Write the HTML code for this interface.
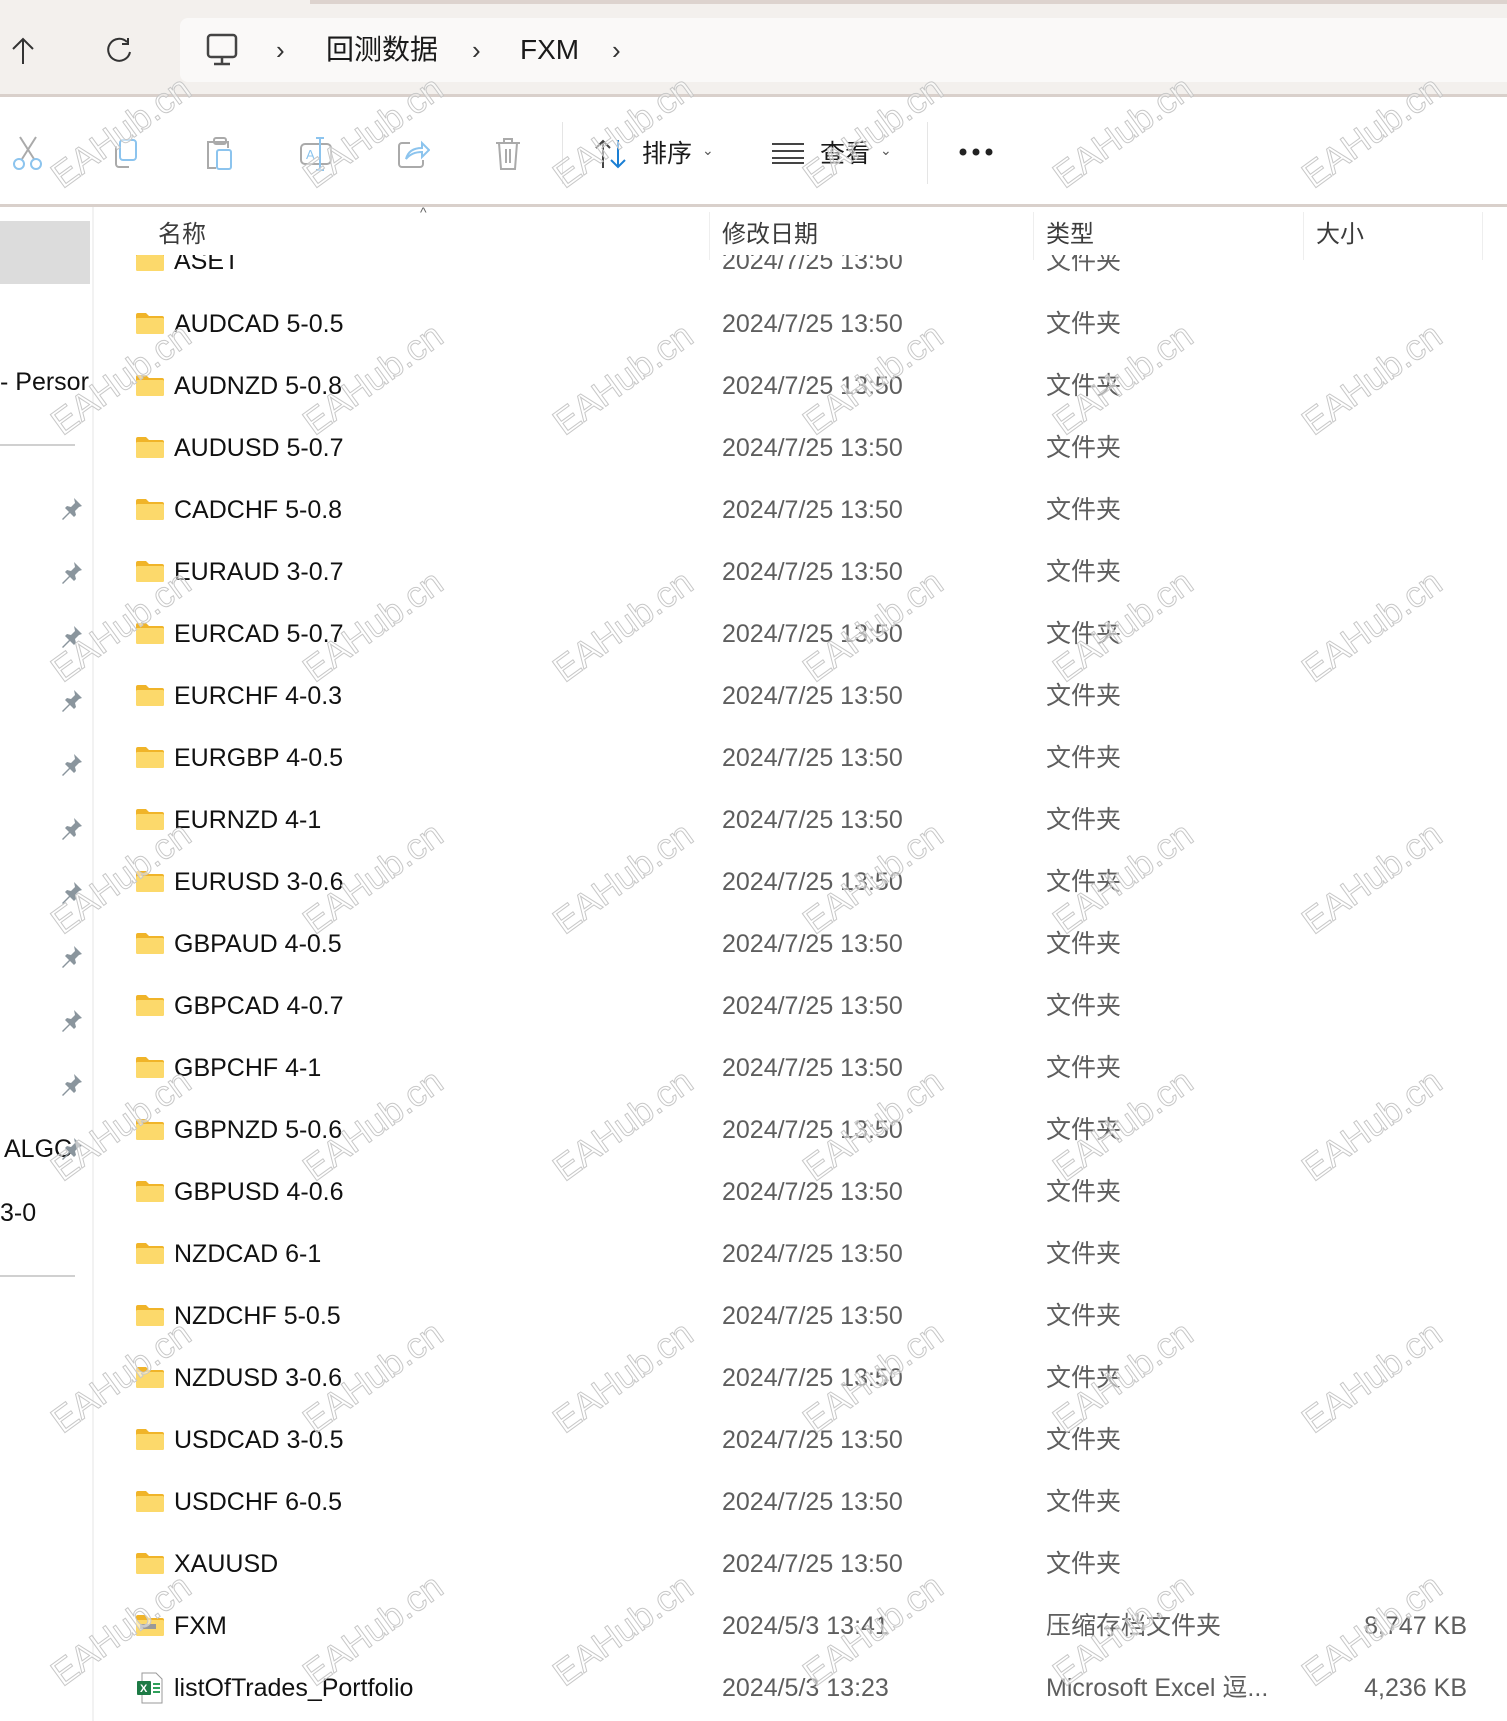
<!DOCTYPE html>
<html><head><meta charset="utf-8"><style>
*{margin:0;padding:0;box-sizing:border-box}
body{width:1507px;height:1721px;overflow:hidden;background:#fff;font-family:"Liberation Sans","Noto Sans CJK SC",sans-serif;position:relative;color:#1a1a1a}
.abs{position:absolute}
.top{left:0;top:0;width:1507px;height:97px;background:#f3f0ed;border-bottom:3px solid #d9d0cb}
.tline{left:310px;top:0;width:1197px;height:4px;background:#ddd3ce}
.addr{left:180px;top:18px;width:1327px;height:64px;background:#faf9f8;border-radius:8px 0 0 8px}
.t26{font-size:28px;color:#1a1a1a;top:30px;line-height:40px}
.chev{font-size:26px;top:30px;line-height:40px;color:#333}
.tb{left:0;top:97px;width:1507px;height:110px;background:#fff;border-bottom:3px solid #d9d0cb}
.hdr{font-size:24px;color:#3c3c3c;top:218px;line-height:34px}
.vd{width:1px;background:#eee;top:212px;height:48px}
.row{position:absolute;left:0;width:1507px;height:40px;font-size:25px;line-height:40px}
.row .n{position:absolute;left:174px;color:#111}
.row .d{position:absolute;left:722px;color:#5e5e5e}
.row .t{position:absolute;left:1046px;color:#5e5e5e}
.row .s{position:absolute;right:40px;color:#5e5e5e}
.fold{position:absolute;left:136px;top:8px;width:28px;height:22px}
.side{left:0;top:207px;width:94px;height:1514px;border-right:2px solid #f2f2f2}
.pin{position:absolute;left:60px;width:24px;height:24px}
.wm{position:absolute;font-size:36px;font-family:"Liberation Sans",sans-serif;color:rgba(255,255,255,0.5);-webkit-text-stroke:1px #c8c8c8;transform:translate(-50%,-50%) rotate(-36deg);white-space:nowrap;pointer-events:none}
</style></head><body>
<div class="abs top"></div>
<div class="abs tline"></div>
<div class="abs addr"></div>
<svg class="abs" style="left:10px;top:36px" width="26" height="30" viewBox="0 0 26 30"><path d="M13 28V3M3 13L13 3l10 10" fill="none" stroke="#333" stroke-width="2"/></svg>
<svg class="abs" style="left:106px;top:36px" width="28" height="30" viewBox="0 0 28 30"><path d="M21 6A11 11 0 1 0 24 16" fill="none" stroke="#333" stroke-width="2"/><path d="M16 4h6v-6" transform="translate(0,4)" fill="none" stroke="#333" stroke-width="2"/></svg>
<svg class="abs" style="left:206px;top:33px" width="32" height="34" viewBox="0 0 32 34"><rect x="2" y="2" width="28" height="22" rx="3" fill="none" stroke="#444" stroke-width="2.5"/><path d="M16 25v5M8 31h16" stroke="#444" stroke-width="2.5"/></svg>
<div class="abs chev" style="left:276px">›</div>
<div class="abs t26" style="left:326px">回测数据</div>
<div class="abs chev" style="left:472px">›</div>
<div class="abs t26" style="left:520px">FXM</div>
<div class="abs chev" style="left:612px">›</div>

<div class="abs tb"></div>
<svg class="abs" style="left:12px;top:135px" width="32" height="36" viewBox="0 0 32 36"><path d="M8 2l14 22M24 2L10 24" stroke="#aaa" stroke-width="2"/><circle cx="7" cy="29" r="5" fill="none" stroke="#8cc4ee" stroke-width="2"/><circle cx="24" cy="29" r="5" fill="none" stroke="#8cc4ee" stroke-width="2"/></svg>
<svg class="abs" style="left:108px;top:138px" width="32" height="32" viewBox="0 0 32 32"><rect x="12" y="2" width="16" height="20" rx="3" fill="none" stroke="#8cc4ee" stroke-width="2"/><path d="M8 8v18a3 3 0 0 0 3 3h10" fill="none" stroke="#aaa" stroke-width="2"/></svg>
<svg class="abs" style="left:204px;top:136px" width="32" height="36" viewBox="0 0 32 36"><path d="M8 6H4v26h8" fill="none" stroke="#aaa" stroke-width="2"/><path d="M8 6h16v6" fill="none" stroke="#aaa" stroke-width="2"/><rect x="10" y="2" width="12" height="6" rx="2" fill="none" stroke="#aaa" stroke-width="2"/><rect x="13" y="14" width="14" height="19" rx="2" fill="none" stroke="#8cc4ee" stroke-width="2"/></svg>
<svg class="abs" style="left:298px;top:136px" width="36" height="36" viewBox="0 0 36 36"><rect x="3" y="8" width="30" height="20" rx="4" fill="none" stroke="#aaa" stroke-width="2"/><path d="M22 2v32M18 2h8M18 34h8" stroke="#8cc4ee" stroke-width="2"/><text x="8" y="23" font-size="13" fill="#8cc4ee">A</text></svg>
<svg class="abs" style="left:396px;top:137px" width="34" height="32" viewBox="0 0 34 32"><path d="M14 6H6a3 3 0 0 0-3 3v18a3 3 0 0 0 3 3h18a3 3 0 0 0 3-3v-4" fill="none" stroke="#aaa" stroke-width="2"/><path d="M10 22c2-8 8-11 16-11V6l7 7-7 7v-5c-7 0-12 2-16 7z" fill="none" stroke="#8cc4ee" stroke-width="2"/></svg>
<svg class="abs" style="left:493px;top:136px" width="30" height="36" viewBox="0 0 30 36"><path d="M3 7h24M11 7V3h8v4M6 7l2 26h14l2-26M13 13v14M17 13v14" fill="none" stroke="#aaa" stroke-width="2"/></svg>
<div class="abs" style="left:562px;top:122px;width:1px;height:62px;background:#e5e5e5"></div>
<svg class="abs" style="left:594px;top:138px" width="34" height="32" viewBox="0 0 34 32"><path d="M9 30V3M2 10l7-7 7 7" fill="none" stroke="#444" stroke-width="2"/><path d="M24 2v27M17 22l7 7 7-7" fill="none" stroke="#1a7fd4" stroke-width="2"/></svg>
<div class="abs" style="left:642px;top:137px;font-size:25px;line-height:34px;color:#1a1a1a">排序</div>
<div class="abs" style="left:702px;top:142px;font-size:14px;color:#555">⌄</div>
<svg class="abs" style="left:772px;top:142px" width="32" height="22" viewBox="0 0 32 22"><path d="M0 2h32M0 9h32M0 16h32M0 21h32" stroke="#444" stroke-width="2"/></svg>
<div class="abs" style="left:820px;top:137px;font-size:25px;line-height:34px;color:#1a1a1a">查看</div>
<div class="abs" style="left:880px;top:142px;font-size:14px;color:#555">⌄</div>
<div class="abs" style="left:927px;top:122px;width:1px;height:62px;background:#e5e5e5"></div>
<svg class="abs" style="left:958px;top:146px" width="36" height="12" viewBox="0 0 36 12"><circle cx="5" cy="6" r="3.5" fill="#222"/><circle cx="18" cy="6" r="3.5" fill="#222"/><circle cx="31" cy="6" r="3.5" fill="#222"/></svg>

<div class="abs side"></div>
<div class="abs" style="left:0;top:221px;width:90px;height:63px;background:#dcdcdc"></div>
<div class="abs" style="left:0;top:364px;font-size:25px;line-height:36px;color:#111">- Persor</div>
<div class="abs" style="left:0;top:444px;width:75px;height:2px;background:#d0d0d0"></div>
<div class="abs" style="left:4px;top:1131px;font-size:25px;line-height:36px;color:#111">ALGC</div>
<div class="abs" style="left:0;top:1195px;font-size:25px;line-height:36px;color:#111">3-0</div>
<div class="abs" style="left:0;top:1275px;width:75px;height:2px;background:#d0d0d0"></div>
<div id="pins"></div>

<div class="abs" style="left:420px;top:204px;font-size:14px;color:#666">^</div>
<div class="abs hdr" style="left:158px">名称</div>
<div class="abs vd" style="left:709px"></div>
<div class="abs hdr" style="left:722px">修改日期</div>
<div class="abs vd" style="left:1033px"></div>
<div class="abs hdr" style="left:1046px">类型</div>
<div class="abs vd" style="left:1303px"></div>
<div class="abs hdr" style="left:1316px">大小</div>
<div class="abs vd" style="left:1482px"></div>

<div class="abs" style="left:96px;top:255px;width:1411px;height:22px;overflow:hidden">
<div class="row" style="top:-14px"><svg class="fold" style="left:40px" viewBox="0 0 28 22"><path d="M0 3a2 2 0 0 1 2-2h8l3 3h13a2 2 0 0 1 2 2v14a2 2 0 0 1-2 2H2a2 2 0 0 1-2-2z" fill="#f0b429"/><rect x="0" y="6" width="28" height="16" rx="1.5" fill="#fcd96b"/></svg><span class="n" style="left:78px">ASET</span><span class="d" style="left:626px">2024/7/25 13:50</span><span class="t" style="left:950px">文件夹</span></div>
</div>
<div id="rows"></div>
<div id="wms"></div>
<script>
var names=["AUDCAD 5-0.5","AUDNZD 5-0.8","AUDUSD 5-0.7","CADCHF 5-0.8","EURAUD 3-0.7","EURCAD 5-0.7","EURCHF 4-0.3","EURGBP 4-0.5","EURNZD 4-1","EURUSD 3-0.6","GBPAUD 4-0.5","GBPCAD 4-0.7","GBPCHF 4-1","GBPNZD 5-0.6","GBPUSD 4-0.6","NZDCAD 6-1","NZDCHF 5-0.5","NZDUSD 3-0.6","USDCAD 3-0.5","USDCHF 6-0.5","XAUUSD"];
var fold='<svg class="fold" viewBox="0 0 28 22"><path d="M0 3a2 2 0 0 1 2-2h8l3 3h13a2 2 0 0 1 2 2v14a2 2 0 0 1-2 2H2a2 2 0 0 1-2-2z" fill="#f0b429"/><rect x="0" y="6" width="28" height="16" rx="1.5" fill="#fcd96b"/></svg>';
var h='';
names.forEach(function(n,i){var y=324+62*i-20;h+='<div class="row" style="top:'+y+'px">'+fold+'<span class="n">'+n+'</span><span class="d">2024/7/25 13:50</span><span class="t">文件夹</span></div>';});
var y=324+62*21-20;
h+='<div class="row" style="top:'+y+'px"><svg class="fold" viewBox="0 0 28 22"><path d="M0 3a2 2 0 0 1 2-2h8l3 3h13a2 2 0 0 1 2 2v14a2 2 0 0 1-2 2H2a2 2 0 0 1-2-2z" fill="#f0b429"/><rect x="0" y="6" width="28" height="16" rx="1.5" fill="#fcd96b"/><rect x="4" y="10" width="16" height="5" fill="#999"/></svg><span class="n">FXM</span><span class="d">2024/5/3 13:41</span><span class="t">压缩存档文件夹</span><span class="s">8,747 KB</span></div>';
y+=62;
h+='<div class="row" style="top:'+y+'px"><svg class="fold" style="top:4px;height:32px" viewBox="0 0 28 32"><path d="M6 1h14l6 6v24H6z" fill="#fff" stroke="#999"/><rect x="1" y="9" width="14" height="14" rx="1" fill="#1d7a45"/><text x="4" y="20" font-size="11" fill="#fff" font-weight="bold">X</text><path d="M17 12h7M17 16h7M17 20h7" stroke="#2ea05a" stroke-width="2"/></svg><span class="n">listOfTrades_Portfolio</span><span class="d">2024/5/3 13:23</span><span class="t">Microsoft Excel 逗...</span><span class="s">4,236 KB</span></div>';
document.getElementById('rows').innerHTML=h;
var p='';for(var i=0;i<11;i++){p+='<svg class="pin" style="top:'+(496+64*i)+'px" viewBox="0 0 24 24"><path d="M14 2l8 8-3 1-4 4 1 4-2 2-4-4-7 7-1-1 7-7-4-4 2-2 4 1 4-4z" fill="#8a959d"/></svg>';}
document.getElementById('pins').innerHTML=p;
var w='';var xs=[121,373,623,873,1123,1372],ys=[132,379,626,878,1125,1377,1630];
ys.forEach(function(yy){xs.forEach(function(xx){w+='<div class="wm" style="left:'+xx+'px;top:'+yy+'px">EAHub.cn</div>';});});
document.getElementById('wms').innerHTML=w;
</script>
</body></html>
